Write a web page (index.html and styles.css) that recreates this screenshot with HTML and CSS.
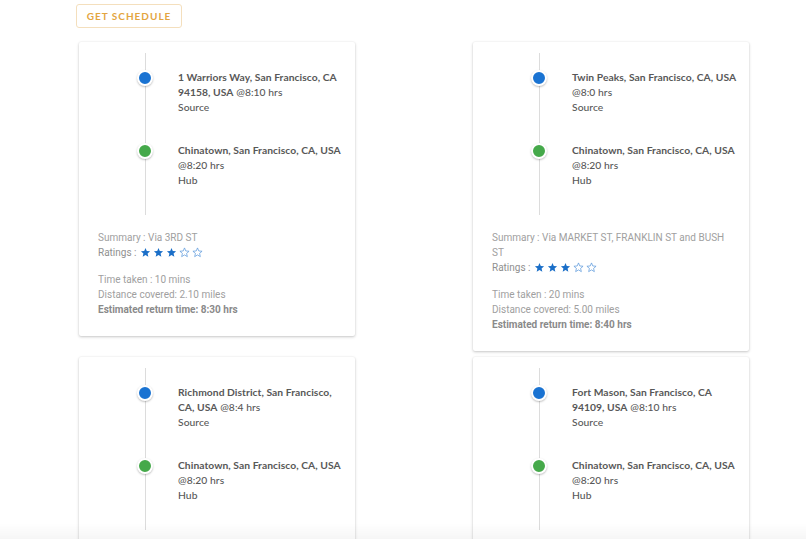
FILE: index.html
```html
<!DOCTYPE html>
<html lang="en">
<head>
<meta charset="utf-8">
<title>Schedule</title>
<link rel="stylesheet" href="styles.css">
</head>
<body>
<div class="page">
  <button class="btn-schedule">GET SCHEDULE</button>
  <div class="grid">
    <div class="card">
      <div class="timeline">
        <div class="item"><span class="dot blue"></span><div class="txt"><b>1 Warriors Way, San Francisco, CA 94158, USA</b> @8:10 hrs<br>Source</div></div>
        <div class="item"><span class="dot green"></span><div class="txt"><b>Chinatown, San Francisco, CA, USA</b> @8:20 hrs<br>Hub</div></div>
      </div>
      <div class="summary">
        <div>Summary : Via 3RD ST</div>
        <div class="ratings">Ratings : <span class="stars">
          <svg viewBox="0 0 24 24"><path class="full" d="M12 17.27L18.18 21l-1.64-7.03L22 9.24l-7.19-.61L12 2 9.19 8.63 2 9.24l5.46 4.73L5.82 21z"/></svg><svg viewBox="0 0 24 24"><path class="full" d="M12 17.27L18.18 21l-1.64-7.03L22 9.24l-7.19-.61L12 2 9.19 8.63 2 9.24l5.46 4.73L5.82 21z"/></svg><svg viewBox="0 0 24 24"><path class="full" d="M12 17.27L18.18 21l-1.64-7.03L22 9.24l-7.19-.61L12 2 9.19 8.63 2 9.24l5.46 4.73L5.82 21z"/></svg><svg viewBox="0 0 24 24"><path class="empty" d="M12 17.27L18.18 21l-1.64-7.03L22 9.24l-7.19-.61L12 2 9.19 8.63 2 9.24l5.46 4.73L5.82 21z"/></svg><svg viewBox="0 0 24 24"><path class="empty" d="M12 17.27L18.18 21l-1.64-7.03L22 9.24l-7.19-.61L12 2 9.19 8.63 2 9.24l5.46 4.73L5.82 21z"/></svg>
        </span></div>
        <div class="stats">
          <div>Time taken : 10 mins</div>
          <div>Distance covered: 2.10 miles</div>
          <div class="est">Estimated return time: 8:30 hrs</div>
        </div>
      </div>
    </div>

    <div class="card">
      <div class="timeline">
        <div class="item"><span class="dot blue"></span><div class="txt"><b>Twin Peaks, San Francisco, CA, USA</b> @8:0 hrs<br>Source</div></div>
        <div class="item"><span class="dot green"></span><div class="txt"><b>Chinatown, San Francisco, CA, USA</b> @8:20 hrs<br>Hub</div></div>
      </div>
      <div class="summary">
        <div>Summary : Via MARKET ST, FRANKLIN ST and BUSH ST</div>
        <div class="ratings">Ratings : <span class="stars">
          <svg viewBox="0 0 24 24"><path class="full" d="M12 17.27L18.18 21l-1.64-7.03L22 9.24l-7.19-.61L12 2 9.19 8.63 2 9.24l5.46 4.73L5.82 21z"/></svg><svg viewBox="0 0 24 24"><path class="full" d="M12 17.27L18.18 21l-1.64-7.03L22 9.24l-7.19-.61L12 2 9.19 8.63 2 9.24l5.46 4.73L5.82 21z"/></svg><svg viewBox="0 0 24 24"><path class="full" d="M12 17.27L18.18 21l-1.64-7.03L22 9.24l-7.19-.61L12 2 9.19 8.63 2 9.24l5.46 4.73L5.82 21z"/></svg><svg viewBox="0 0 24 24"><path class="empty" d="M12 17.27L18.18 21l-1.64-7.03L22 9.24l-7.19-.61L12 2 9.19 8.63 2 9.24l5.46 4.73L5.82 21z"/></svg><svg viewBox="0 0 24 24"><path class="empty" d="M12 17.27L18.18 21l-1.64-7.03L22 9.24l-7.19-.61L12 2 9.19 8.63 2 9.24l5.46 4.73L5.82 21z"/></svg>
        </span></div>
        <div class="stats">
          <div>Time taken : 20 mins</div>
          <div>Distance covered: 5.00 miles</div>
          <div class="est">Estimated return time: 8:40 hrs</div>
        </div>
      </div>
    </div>

    <div class="card partial">
      <div class="timeline">
        <div class="item"><span class="dot blue"></span><div class="txt"><b>Richmond District, San Francisco, CA, USA</b> @8:4 hrs<br>Source</div></div>
        <div class="item"><span class="dot green"></span><div class="txt"><b>Chinatown, San Francisco, CA, USA</b> @8:20 hrs<br>Hub</div></div>
      </div>
    </div>

    <div class="card partial">
      <div class="timeline">
        <div class="item"><span class="dot blue"></span><div class="txt"><b>Fort Mason, San Francisco, CA 94109, USA</b> @8:10 hrs<br>Source</div></div>
        <div class="item"><span class="dot green"></span><div class="txt"><b>Chinatown, San Francisco, CA, USA</b> @8:20 hrs<br>Hub</div></div>
      </div>
    </div>
  </div>
</div>
<div class="bottom-fade"></div>
</body>
</html>
```

FILE: styles.css
```css
html, body {
  margin: 0;
  padding: 0;
  background: #ffffff;
}
body {
  font-family: "Lato", "Liberation Sans", sans-serif;
  overflow: hidden;
  height: 539px;
}
.page {
  padding: 4px 0 0 76px;
}
.btn-schedule {
  display: block;
  width: 106px;
  height: 24px;
  padding: 0;
  background: #fff;
  border: 1px solid #f4dfbd;
  border-radius: 3px;
  color: #e3a53f;
  font-family: "Lato", "Liberation Sans", sans-serif;
  font-weight: 700;
  font-size: 10px;
  letter-spacing: 1px;
}
.grid {
  margin-top: 14px;
  padding-left: 3px;
  display: grid;
  grid-template-columns: 394px 394px;
  row-gap: 6px;
  align-items: start;
}
.card {
  width: 276px;
  background: #fff;
  border-radius: 2px;
  box-shadow: 0 1px 3px rgba(0, 0, 0, 0.22), 0 0 2px rgba(0, 0, 0, 0.06);
}
.card.partial {
  padding-bottom: 40px;
}
.timeline {
  position: relative;
  margin-top: 11px;
  padding: 17px 0 27px;
  display: flex;
  flex-direction: column;
  gap: 28px;
}
.timeline::before {
  content: "";
  position: absolute;
  left: 66px;
  top: 0;
  bottom: 0;
  width: 1px;
  background: #dcdcdc;
}
.item {
  display: flex;
  align-items: flex-start;
}
.dot {
  position: relative;
  flex: none;
  width: 12px;
  height: 12px;
  margin: 0 25px 0 58px;
  border: 2px solid #fff;
  border-radius: 50%;
  box-shadow: 0 1px 2px rgba(0, 0, 0, 0.25);
}
.dot.blue { background: #1a73d2; }
.dot.green { background: #45a94a; }
.txt {
  width: 168px;
  font-size: 10.3px;
  line-height: 15px;
  color: #585858;
  font-weight: 500;
  letter-spacing: 0.05px;
}
.txt b {
  font-weight: 700;
}
.summary {
  padding: 15px 19px 19px;
  font-family: "Roboto", "Liberation Sans", sans-serif;
  font-size: 10px;
  line-height: 15px;
  color: #a0a0a0;
}
.ratings {
  display: flex;
  align-items: center;
  color: #8f8f8f;
}
.stars {
  display: inline-flex;
  align-items: center;
  gap: 2px;
  margin-left: 3px;
}
.stars svg {
  width: 11px;
  height: 11px;
}
.stars .full {
  fill: #1b6fc8;
}
.stars .empty {
  fill: none;
  stroke: #5a98dc;
  stroke-width: 1.6;
  stroke-linejoin: round;
}
.stats {
  margin-top: 12px;
}
.est {
  font-weight: 700;
  color: #8a8a8a;
}
.bottom-fade {
  position: fixed;
  left: 0;
  right: 0;
  bottom: 0;
  height: 16px;
  background: linear-gradient(to bottom, rgba(0, 0, 0, 0), rgba(0, 0, 0, 0.035));
  pointer-events: none;
}
```
